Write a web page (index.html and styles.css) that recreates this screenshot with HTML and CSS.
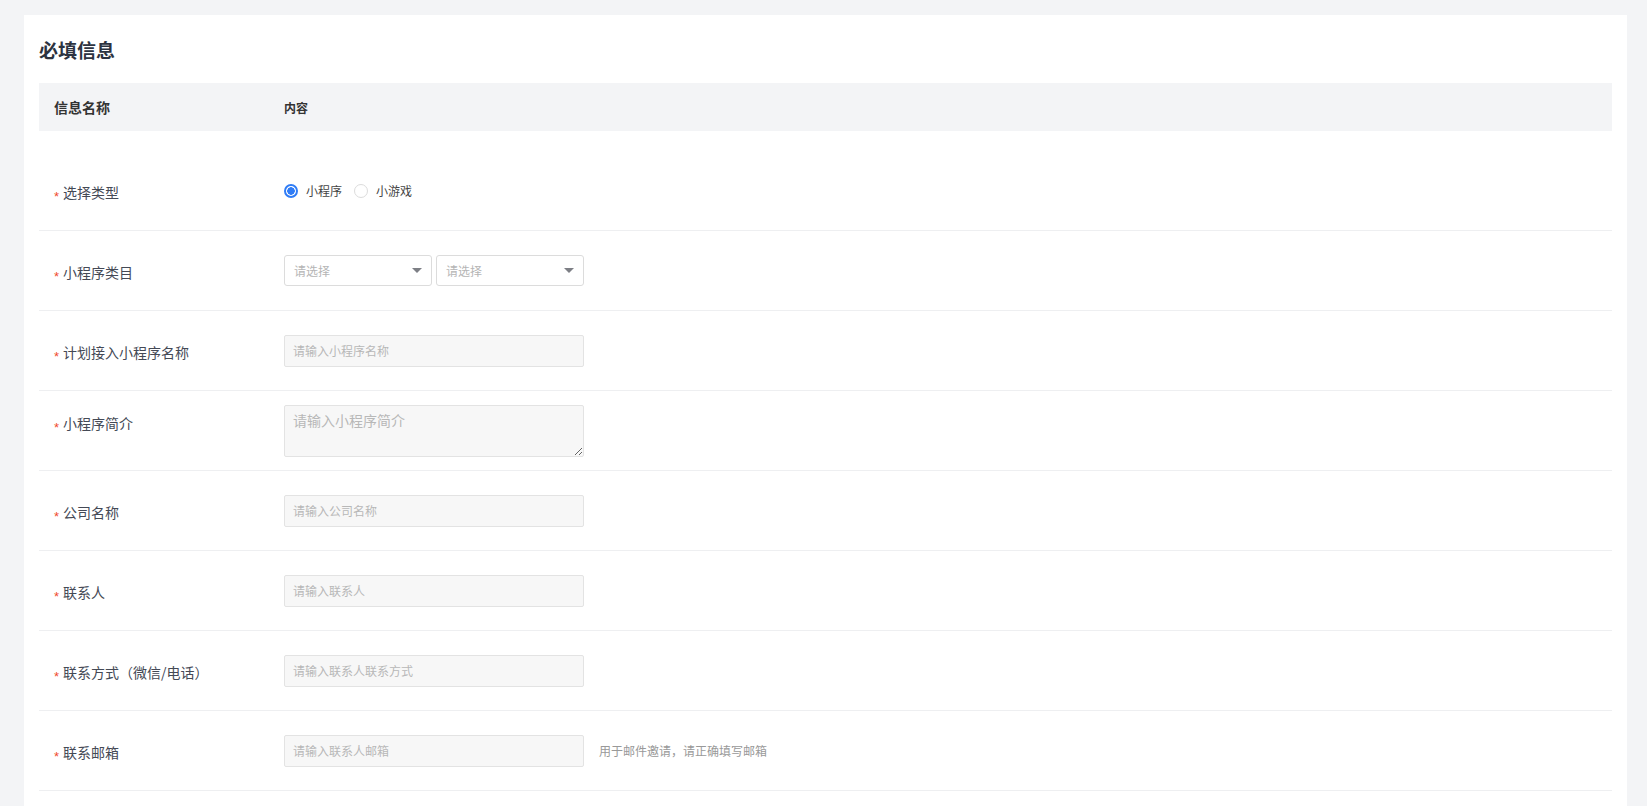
FILE: index.html
```html
<!DOCTYPE html>
<html lang="zh-CN">
<head>
  <meta charset="UTF-8">
  <title>必填信息</title>
  <link rel="stylesheet" href="styles.css">
</head>
<body>

<div class="card">
  <h2 class="card-title">必填信息</h2>

  <!-- column header -->
  <div class="form-head">
    <div class="col-name">信息名称</div>
    <div class="col-value">内容</div>
  </div>

  <div class="form-body">
    <div class="form-row">
      <div class="col-name"><span class="req">*</span>选择类型</div>
      <div class="col-value">
        <label class="radio"><span class="radio-dot checked"></span>小程序</label>
        <label class="radio"><span class="radio-dot"></span>小游戏</label>
      </div>
    </div>

    <div class="form-row">
      <div class="col-name"><span class="req">*</span>小程序类目</div>
      <div class="col-value">
        <div class="select"><span>请选择</span><i class="caret"></i></div>
        <div class="select"><span>请选择</span><i class="caret"></i></div>
      </div>
    </div>

    <div class="form-row">
      <div class="col-name"><span class="req">*</span>计划接入小程序名称</div>
      <div class="col-value"><input class="input" type="text" placeholder="请输入小程序名称"></div>
    </div>

    <div class="form-row row-top">
      <div class="col-name"><span class="req">*</span>小程序简介</div>
      <div class="col-value"><textarea class="textarea" placeholder="请输入小程序简介"></textarea></div>
    </div>

    <div class="form-row">
      <div class="col-name"><span class="req">*</span>公司名称</div>
      <div class="col-value"><input class="input" type="text" placeholder="请输入公司名称"></div>
    </div>

    <div class="form-row">
      <div class="col-name"><span class="req">*</span>联系人</div>
      <div class="col-value"><input class="input" type="text" placeholder="请输入联系人"></div>
    </div>

    <div class="form-row">
      <div class="col-name"><span class="req">*</span>联系方式（微信/电话）</div>
      <div class="col-value"><input class="input" type="text" placeholder="请输入联系人联系方式"></div>
    </div>

    <div class="form-row">
      <div class="col-name"><span class="req">*</span>联系邮箱</div>
      <div class="col-value">
        <input class="input" type="text" placeholder="请输入联系人邮箱">
        <span class="hint">用于邮件邀请，请正确填写邮箱</span>
      </div>
    </div>
  </div>
</div>

</body>
</html>
```

FILE: styles.css
```css
body {
  margin: 0;
  background: #f3f4f6;
  font-family: "Noto Sans CJK SC", "Noto Sans", sans-serif;
  color: #444955;
}
.card {
  margin: 15px 20px 0 24px;
  padding: 0 15px 20px;
  background: #fff;
  min-height: 800px;
}
.card-title {
  margin: 0;
  padding: 21px 0 20px;
  font-size: 19px;
  line-height: 27px;
  font-weight: bold;
  color: #2c3340;
}
.form-head {
  display: flex;
  align-items: center;
  height: 48px;
  background: #f3f4f6;
  font-weight: bold;
  color: #333;
}
.form-head .col-name {
  font-size: 14px;
  padding-left: 15px;
}
.form-head .col-value {
  font-size: 12px;
}
.col-name {
  width: 245px;
  box-sizing: border-box;
  flex-shrink: 0;
}
.col-value {
  display: flex;
  align-items: center;
}
.form-body {
  padding-top: 20px;
}
.form-row {
  display: flex;
  align-items: center;
  height: 80px;
  box-sizing: border-box;
  border-bottom: 1px solid #eeeff1;
}
.form-row .col-name {
  padding-left: 15px;
  font-size: 14px;
  line-height: 20px;
  padding-top: 3px;
}
.form-row.row-top {
  align-items: flex-start;
  padding-top: 14px;
}
.form-row.row-top .col-name {
  margin-top: 5px;
}
.req {
  display: inline-block;
  width: 9px;
  color: #f04a2c;
  font-family: "Liberation Sans", sans-serif;
  font-size: 13px;
  line-height: 8px;
  vertical-align: -3px;
}

/* radio */
.radio {
  display: inline-flex;
  align-items: center;
  font-size: 12px;
  color: #444;
  margin-right: 12px;
}
.radio-dot {
  width: 14px;
  height: 14px;
  box-sizing: border-box;
  border: 1px solid #dcdcdc;
  border-radius: 50%;
  margin-right: 8px;
  background: #fff;
}
.radio-dot.checked {
  border: 2px solid #2f7cf6;
  background: radial-gradient(circle, #2f7cf6 0 3.5px, #fff 4px);
}

/* select */
.select {
  display: flex;
  align-items: center;
  justify-content: space-between;
  width: 148px;
  height: 31px;
  box-sizing: border-box;
  padding: 0 9px 0 9px;
  margin-right: 4px;
  border: 1px solid #dcdcdc;
  border-radius: 3px;
  font-size: 12px;
  color: #b5b5b5;
}
.caret {
  width: 0;
  height: 0;
  border-left: 5px solid transparent;
  border-right: 5px solid transparent;
  border-top: 5px solid #7d7f85;
}

/* text fields */
.input, .textarea {
  width: 300px;
  box-sizing: border-box;
  border: 1px solid #e3e3e3;
  border-radius: 2px;
  background: #f7f7f7;
  font-family: inherit;
  color: #333;
  outline: none;
  margin: 0;
}
.input {
  height: 32px;
  padding: 0 8px;
  font-size: 12px;
}
.textarea {
  display: block;
  height: 52px;
  padding: 4px 8px;
  font-size: 14px;
  line-height: 20px;
}
.input::placeholder, .textarea::placeholder {
  color: #b8b8b8;
}
.hint {
  margin-left: 15px;
  font-size: 12px;
  color: #999;
}
```
